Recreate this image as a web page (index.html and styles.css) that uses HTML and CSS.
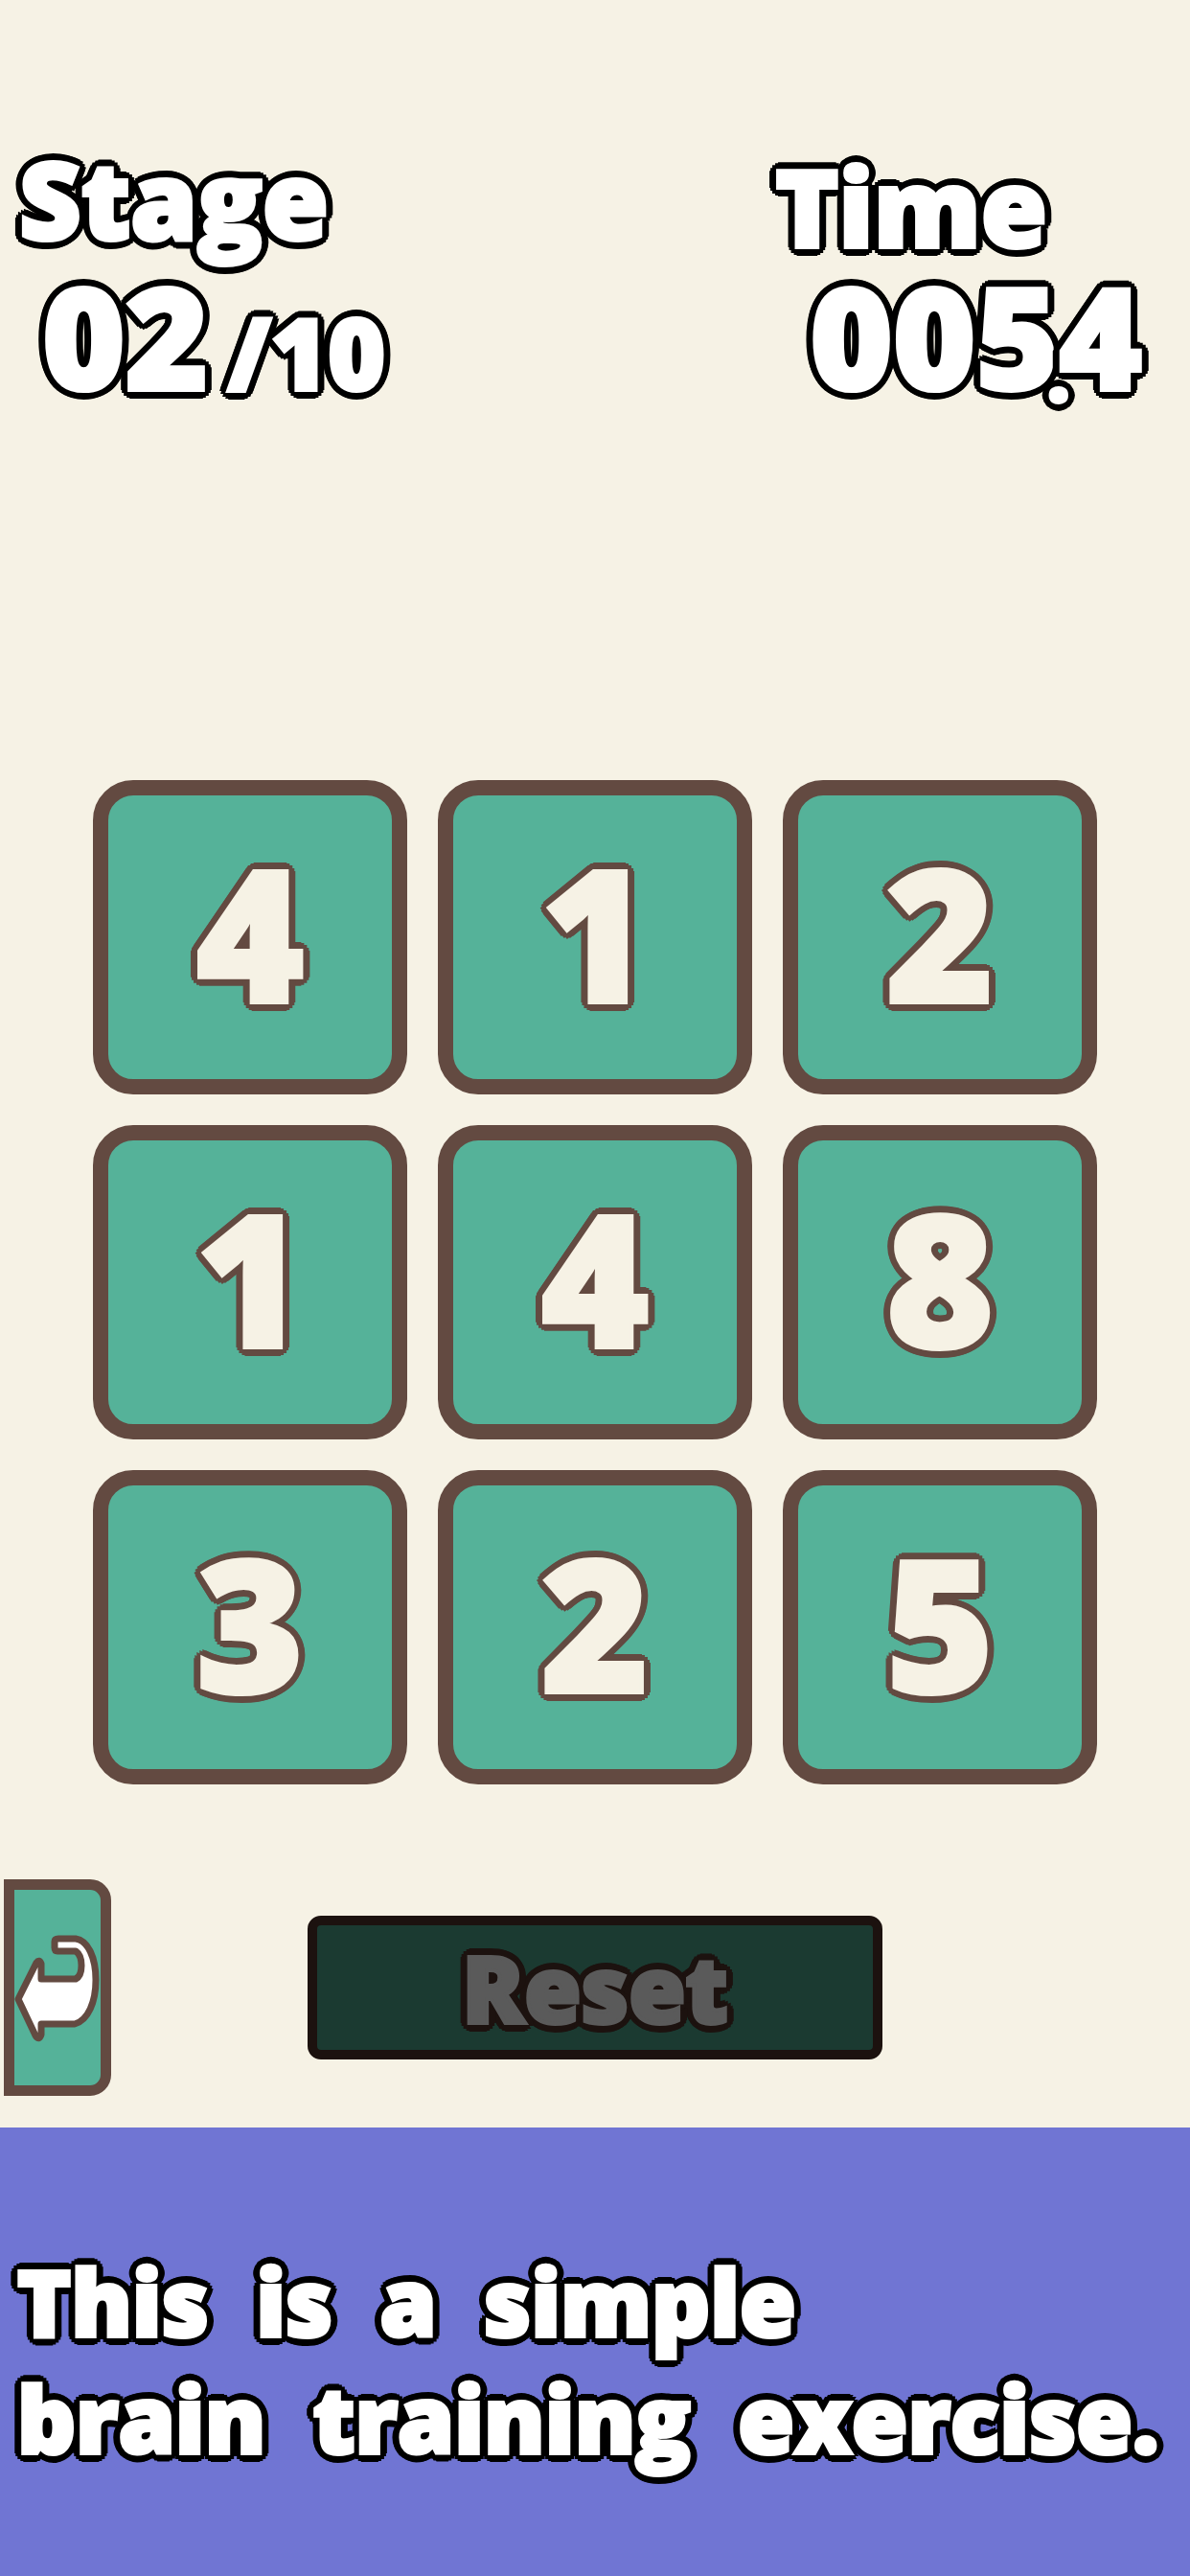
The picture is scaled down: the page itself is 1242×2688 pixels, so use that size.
FILE: index.html
```html
<!DOCTYPE html>
<html lang="en">
<head>
  <meta charset="UTF-8">
  <meta name="viewport" content="width=device-width, initial-scale=1.0">
  <title>Brain Training</title>
  <link rel="stylesheet" href="styles.css">
</head>
<body>
  <header class="scores">
    <div class="score">
      <h2 class="score-label">Stage</h2>
      <p class="score-value">02<span class="total">/10</span></p>
    </div>
    <div class="score score-time">
      <h2 class="score-label">Time</h2>
      <p class="score-value">005<span class="point">.</span>4</p>
    </div>
  </header>

  <main class="board">
    <button class="tile">4</button>
    <button class="tile">1</button>
    <button class="tile">2</button>
    <button class="tile">1</button>
    <button class="tile">4</button>
    <button class="tile">8</button>
    <button class="tile">3</button>
    <button class="tile">2</button>
    <button class="tile">5</button>
  </main>

  <div class="controls">
    <button class="back" aria-label="Back">
      <svg class="back-icon" viewBox="0 0 90 116">
        <path d="M4 70 L23 32 Q26 28 28 33 V49 H64 Q70 46 70 35 Q70 24 64 20 H45 Q42 20 42 16 V10 Q42 7 46 7 H64 C77 9 85 27 85 50 C85 73 77 92 63 96 H28 V107 Q26 114 22 108 Z"/>
      </svg>
    </button>
    <button class="reset" disabled>Reset</button>
  </div>

  <footer class="banner">
    <p class="banner-text">This  is  a  simple
brain  training  exercise.</p>
  </footer>
</body>
</html>
```
FILE: styles.css
```css
* {
  box-sizing: border-box;
}

body {
  --line: #000;
  display: flex;
  flex-direction: column;
  min-height: 100vh;
  margin: 0;
  background: #f6f2e5;
  font-family: "Open Sans", "Noto Sans", sans-serif;
  font-weight: 800;
}

h2,
p {
  margin: 0;
  font-weight: 800;
}

button {
  padding: 0;
  font-family: inherit;
  font-weight: 800;
  cursor: pointer;
}

/* fat white letters with a round outline */
.score-label,
.score-value,
.banner-text,
.tile,
.reset {
  -webkit-text-stroke: 4px currentColor;
  text-shadow:
    9px 0 var(--line), -9px 0 var(--line), 0 9px var(--line), 0 -9px var(--line),
    6px 6px var(--line), -6px 6px var(--line), 6px -6px var(--line), -6px -6px var(--line),
    8px 3px var(--line), -8px 3px var(--line), 8px -3px var(--line), -8px -3px var(--line),
    3px 8px var(--line), -3px 8px var(--line), 3px -8px var(--line), -3px -8px var(--line),
    4px 4px var(--line), -4px 4px var(--line), 4px -4px var(--line), -4px -4px var(--line);
}

.scores {
  display: flex;
  justify-content: space-between;
  height: 814px;
  padding: 140px 50px 0 20px;
  color: #fff;
}

.score-label {
  font-size: 112px;
  line-height: 134px;
}

.score-value {
  position: relative;
  padding-left: 24px;
  font-size: 148px;
  line-height: 152px;
}

.score-time .score-label {
  padding-top: 16px;
  line-height: 118px;
}

.score-time .score-value {
  padding-left: 36px;
}

.total {
  padding-left: 20px;
  font-size: 102px;
}

/* the point hangs under the digits and takes no room of its own */
.point {
  position: absolute;
  margin-left: -12px;
  font-size: 80px;
  line-height: 228px;
}

.board {
  display: grid;
  grid-template-columns: repeat(3, 1fr);
  gap: 32px;
  padding: 0 97px;
}

.tile {
  --line: #634a41;
  aspect-ratio: 1;
  padding-bottom: 12px;
  border: 16px solid #634a41;
  border-radius: 42px;
  background: #55b299;
  color: #f6f2e5;
  font-size: 192px;
  line-height: 200px;
}

.controls {
  display: grid;
  grid-template-columns: 1fr 600px 1fr;
  align-items: center;
  padding: 99px 4px 33px;
}

.back {
  display: flex;
  align-items: center;
  justify-content: center;
  width: 112px;
  height: 226px;
  border: 11px solid #634a41;
  border-radius: 0 22px 22px 0;
  background: #55b299;
}

.back-icon {
  flex: none;
  width: 90px;
  height: 116px;
  fill: #fff;
  stroke: #634a41;
  stroke-width: 7;
  stroke-linejoin: round;
}

.reset {
  --line: #1c120f;
  height: 150px;
  border: 10px solid #1c120f;
  border-radius: 14px;
  background: #1b3a31;
  color: #5a5a5a;
  font-size: 96px;
  line-height: 120px;
  cursor: default;
}

.banner {
  flex: 1;
  padding: 120px 18px;
  background: #7075d3;
  color: #fff;
}

.banner-text {
  font-size: 95px;
  line-height: 122px;
  white-space: pre;
}
```
